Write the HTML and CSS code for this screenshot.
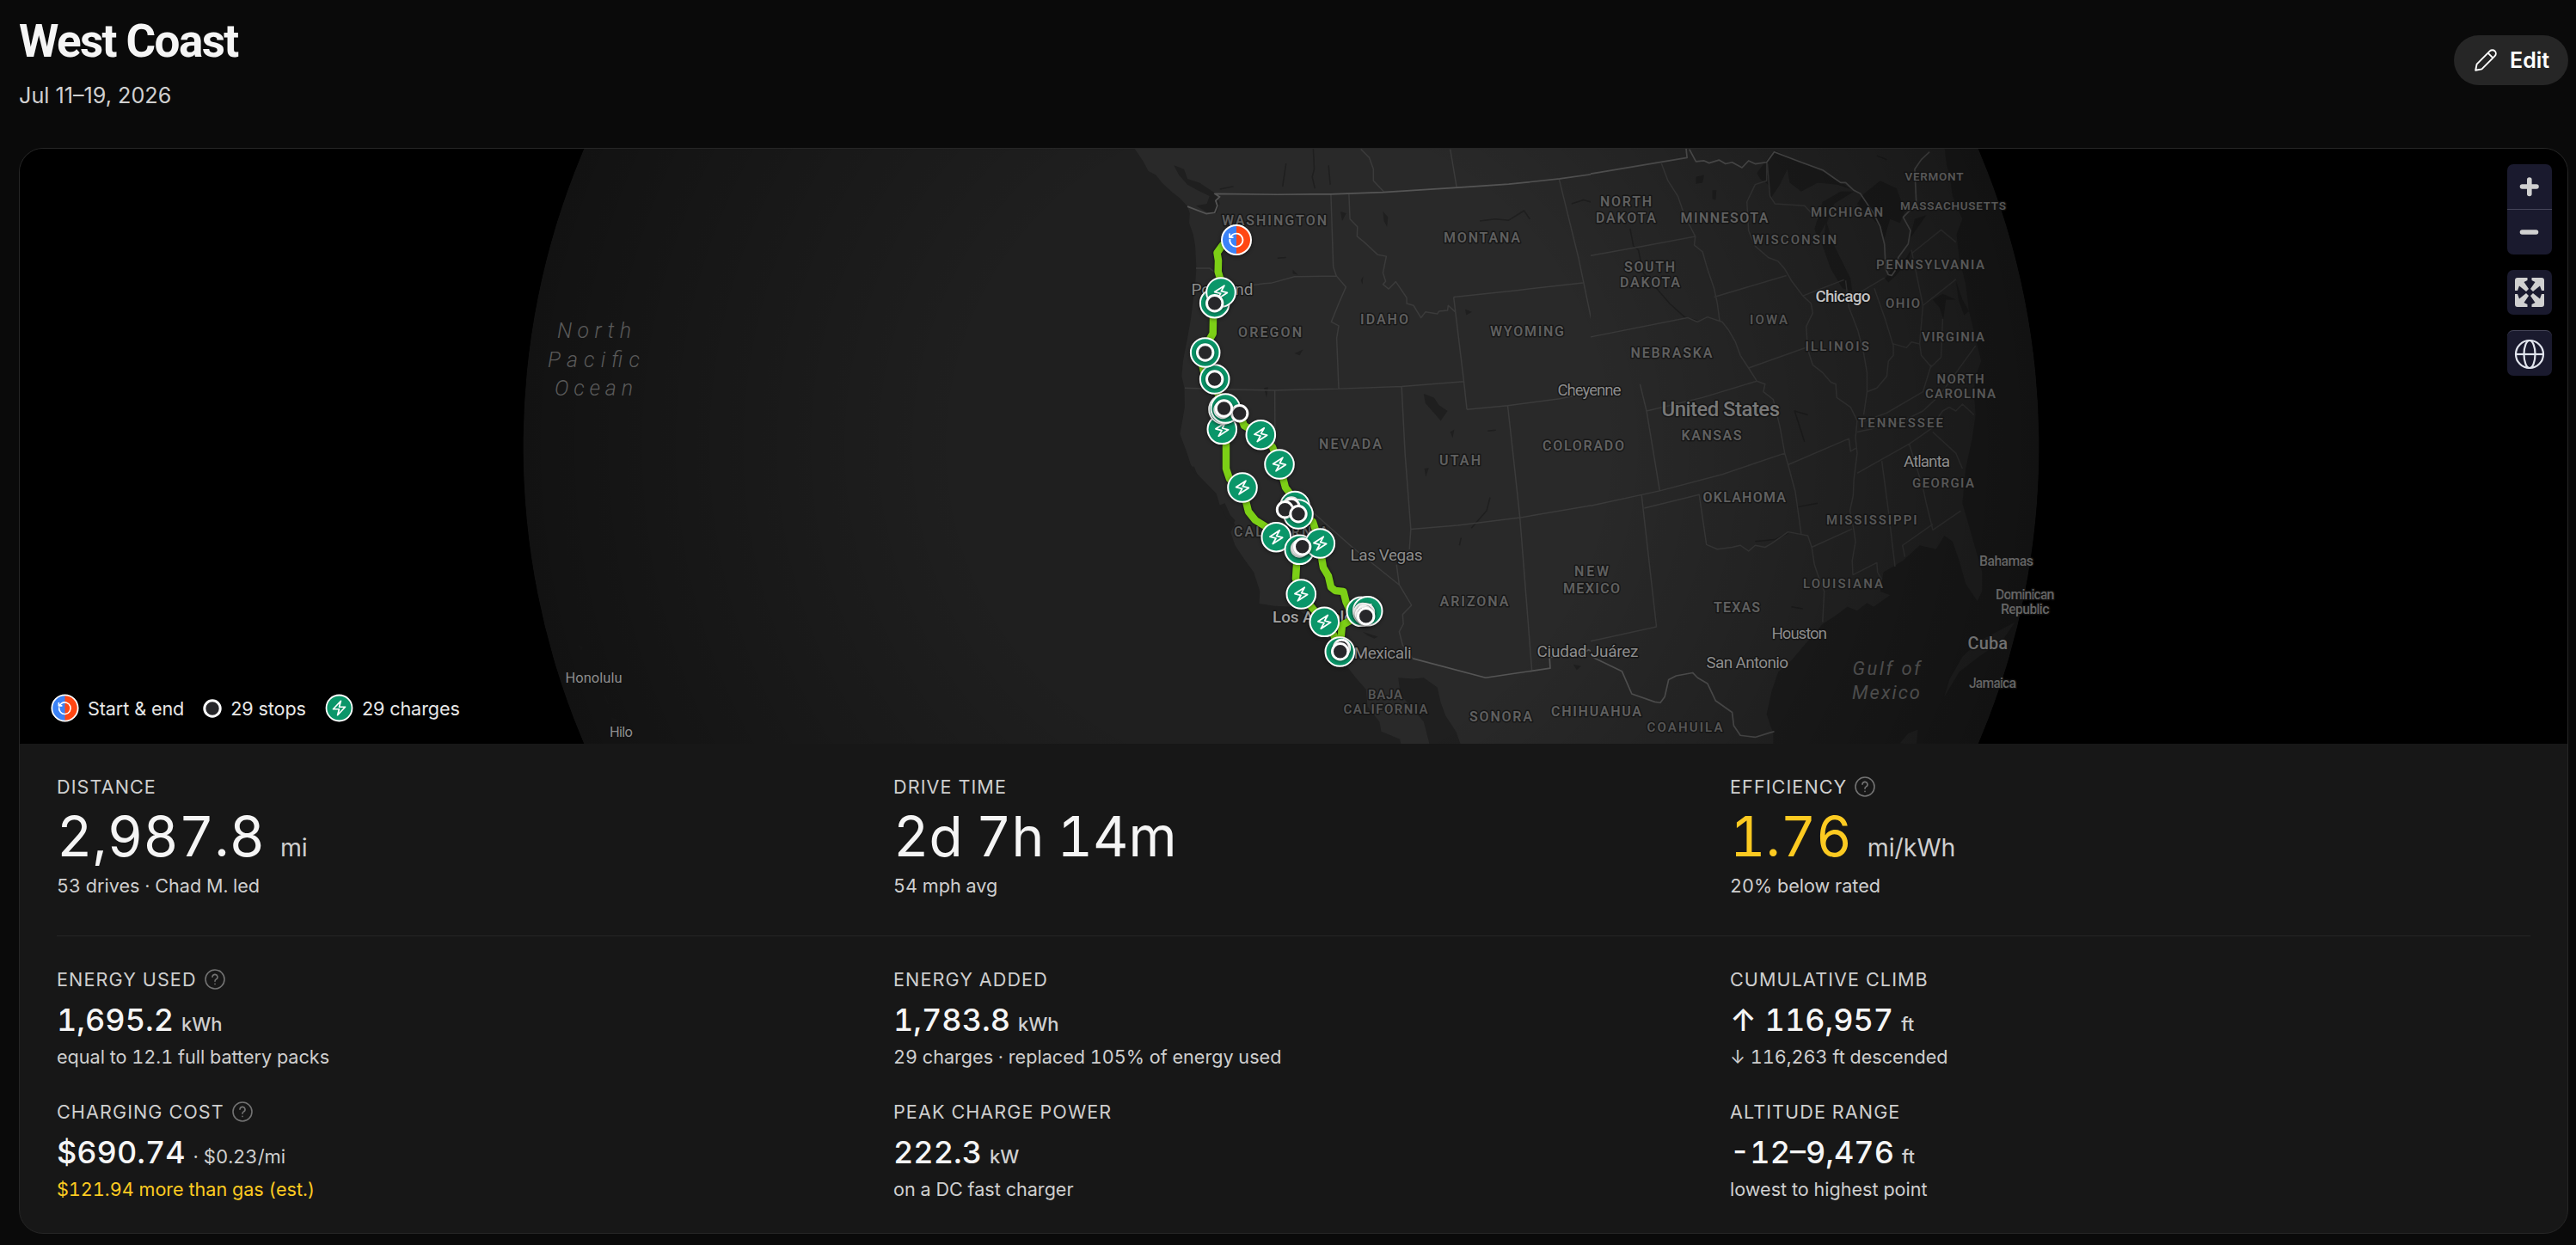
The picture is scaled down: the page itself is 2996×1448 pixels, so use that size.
FILE: index.html
```html
<!DOCTYPE html>
<html lang="en">
<head>
<meta charset="utf-8">
<title>West Coast</title>
<link rel="stylesheet" href="styles.css">
</head>
<body>
<header class="header">
  <div class="heading">
    <h1 class="title">West Coast</h1>
    <p class="dates">Jul 11–19, 2026</p>
  </div>
  <button class="edit" type="button">
    <svg class="edit-icon" viewBox="0 0 26 26"><path d="M1.2 24.8 L2.6 17.6 L17.8 2.4 A4.1 4.1 0 0 1 23.6 8.2 L8.4 23.4 Z M15.6 4.6 L21.4 10.4"/></svg>
    <span>Edit</span>
  </button>
</header>
<main class="card">
  <section class="map">
    <svg class="globe" viewBox="23 173 2963 692">
      <defs>
        <radialGradient id="shade" gradientUnits="userSpaceOnUse" cx="1490" cy="519" r="881.5">
          <stop offset=".42" stop-color="#000" stop-opacity="0"/>
          <stop offset="1" stop-color="#000" stop-opacity=".42"/>
        </radialGradient>
        <clipPath id="disc"><circle cx="1490" cy="519" r="881.5"/></clipPath>
        <g id="bolt"><path class="bolt" d="M14.25 2.25 3.75 13.5H12L9.75 21.75 20.25 10.5H12Z"/></g>
        <g id="charge"><circle class="charge-dot" r="16.8"/><use href="#bolt" transform="rotate(14) scale(.88) translate(-12 -12)"/></g>
        <g id="stop"><circle class="stop-dot" r="9.2"/></g>
        <g id="ends">
          <circle r="17" fill="#3b82f6"/><path d="M0-17A17 17 0 0 1 0 17Z" fill="#ff4713"/>
          <circle class="ring" r="17"/>
          <path class="loop" d="M-7.6 -1.2 A7.6 7.6 0 1 0 -4.6 -5.9 L-7.6 -3 M-8-7.4V-2.9H-3.5"/>
        </g>
      </defs>
      <g clip-path="url(#disc)">
        <circle cx="1490" cy="519" r="881.5" fill="#1f1f1f"/>
        <g transform="translate(1300 170) scale(.3954 .4464)">
          <path class="land" d="M45 0 75 40 90 65 112 75 130 95 160 120 182 135 205 157 212 175 210 200 222 230 228 260 231 318 228 360 222 400 215 450 205 500 192 560 188 600 196 630 197 680 190 715 183 750 200 790 215 830 235 855 262 880 290 905 300 935 325 965 345 985 332 1005 345 1040 375 1080 400 1110 418 1160 416 1192 460 1198 515 1200 560 1225 590 1258 625 1290 640 1320 670 1350 700 1385 730 1415 735 1460 770 1500 775 1525 830 1545 835 1568 920 1568 900 1500 862 1460 832 1430 825 1385 870 1388 900 1385 940 1410 950 1450 965 1485 995 1525 1012 1568H1600V0Z"/>
          <path class="water" d="M165 50 195 60 205 85 240 95 265 110 290 125 300 150 290 175 262 172 230 155 262 150 270 130 235 115 205 100 180 75ZM900 645 930 655 945 675 970 690 950 715 925 690 905 670ZM780 170 795 185 792 210 783 195ZM655 170 672 175 660 195ZM520 540 545 530 535 545ZM978 745 990 738 985 760ZM1022 425 1042 432 1025 440ZM715 350 722 338 720 360ZM902 840 915 838 906 862ZM720 1265 765 1278 755 1283 735 1275ZM1340 1350 1362 1355 1350 1365ZM430 630 442 628 438 655ZM300 935 315 930 330 960 345 975 340 985 320 970ZM210 835 225 835 235 860ZM515 322 530 335 515 332Z"/>
          <path class="river" d="M495 45 490 75 485 105M575 5 578 60 572 80 580 110M620 50 625 100M300 112 340 105M1065 195 1110 190 1150 193 1195 168 1212 190M1095 915 1085 950 1040 995M1010 1020 1005 1040M1088 742 1112 740M1335 150 1370 140 1410 150M470 292 495 290"/>
          <path class="state" d="M627 125 634 315 643 338 671 367 650 410 628 458 650 468 644 500 650 632M230 318 270 318 282 326M400 362 430 358 450 357 520 340 643 338M197 630 330 634 462 636 650 632 835 626 1018 613M462 636 463 860 500 890 575 955 690 1045 828 1143 864 1196 838 1220 840 1245 828 1265 838 1300 868 1335M835 626 845 800 862 998 858 1050M820 1090 828 1143M862 998 1000 988 1183 968 1380 938 1600 898M1147 676 1165 820 1183 968 1218 1365M680 125 683 190 705 210 704 235 725 250 765 283 790 287 780 330 788 352 780 360 797 372 818 353 850 395 850 410 870 415 892 447 905 432 940 437 945 430 970 428 972 415 993 432M988 393 1180 375 1368 356M988 393 1018 613 1027 686M1027 686 1147 676 1300 658 1427 635 1540 620 1570 710M1298 85 1355 290 1403 495 1427 615M715 8 740 30 752 60 752 90 782 118M978 8 997 108M1392 8 1418 68"/>
          <path class="border" d="M205 157 260 176 285 173 293 155 288 142 300 132 285 124 470 126 625 125 780 120 1000 108 1150 99 1300 85 1420 70 1600 44M868 1335 1082 1385 1272 1360 1270 1332 1370 1320 1385 1312 1440 1342 1480 1368 1512 1427 1568 1445"/>
        </g>
        <g transform="translate(1850 170) scale(.38265 .4464)">
          <path class="land" d="M0 0H1075L1082 50 1090 70 1100 130 1130 190 1112 230 1120 290 1140 360 1150 430 1170 500 1187 560 1170 600 1165 640 1170 700 1160 760 1140 840 1130 930 1160 1020 1190 1110 1190 1160 1175 1185 1140 1140 1120 1080 1100 1030 1075 1015 1050 1050 1000 1040 950 1080 890 1110 880 1160 910 1170 860 1200 840 1190 810 1210 780 1200 750 1220 705 1245 660 1290 610 1340 570 1370 550 1420 535 1480 555 1530 555 1568H0ZM1075 1435 1090 1390 1130 1330 1180 1290 1290 1240 1250 1290 1180 1330 1120 1370ZM940 1556 965 1530 995 1520 990 1560Z"/>
          <path class="water" d="M505 70 545 25 560 12 640 42 735 78 790 112 750 100 690 95 640 118 605 95 598 60 575 100 548 135 540 100 515 85ZM690 190 705 145 760 118 800 118 740 150 718 200 735 250 790 345 795 378 765 370 730 320 705 260 715 200 690 240 680 215ZM810 150 830 125 880 90 930 110 955 170 940 200 910 190 893 240 870 200ZM895 345 920 315 955 295 975 270 965 300 930 335 905 355ZM970 240 985 190 1020 180 975 235ZM320 80 345 75 340 95 320 98ZM370 115 382 115 380 140 370 138ZM1040 400 1070 385 1110 400 1080 400 1072 450 1060 420ZM1110 350 1130 400 1150 430 1135 440 1118 400Z"/>
          <path class="river" d="M120 215 130 260 145 270 160 330 215 385 240 410 285 445 325 455M650 770 620 690 660 700M870 25 900 35M500 1030 560 1025 600 1008M610 1200 645 1205M630 940 690 930"/>
          <path class="state" d="M215 45 235 90 265 130 285 180 300 205 318 235 315 258 340 275 355 320 375 370 385 410 392 455M0 285 150 262 318 235M375 393 595 337M535 42 535 90 500 100 475 145 480 220 500 260 540 290 570 300 590 320 610 350 645 390 670 410 675 435 655 470 660 530 675 570 705 590 730 615 745 620 748 655 790 680 810 715 805 760 810 800 800 870 798 910 788 950 800 1000 805 1030 795 1080 797 1117M537 45 545 130 560 150 650 155 672 175 690 188M645 390 770 348M0 497 295 447 325 458 355 445 400 458 420 480 440 510 455 545 480 578 505 612 530 620 525 640 555 660 575 730 590 800 600 830 622 900 640 1010M480 578 660 523M150 620 170 690 210 898M170 690 340 655 505 612M0 937 210 898 400 855 590 800M600 830 785 762 790 795 810 785M155 910 200 1252 0 1290M163 943 330 908 352 1038 385 1050 430 1045 455 1040 480 1055 500 1040 530 1045 550 1035 600 1005 660 1015 672 1045 680 1090 690 1115 710 1160 705 1240M672 1045 795 997M797 1117 870 1085 872 1110 885 1130M775 350 785 420 812 480 830 540 840 590 840 640 830 700M862 370 895 450 920 520M840 640 870 630 900 600 905 560 920 545 920 515 960 525 975 510 1000 515 1010 415 975 270M820 380 893 343M1010 415 1110 347M975 280 1065 218 1110 250M820 720 900 695 1010 640 1035 570M810 745 940 720 1010 690 1060 650 1170 520M810 852 970 775 1045 730M885 820 905 950 925 1095M968 775 1010 890 1020 930 1040 1000 1125 950M955 1070 948 1040 1040 985M1040 745 1110 800 1130 840M1045 720 1070 690 1090 680 1110 690 1130 672 1165 700M1000 515 1005 545 1035 575 1065 550 1070 450"/>
          <path class="border" d="M0 72 28 68 293 30 290 5M300 8 320 40 345 38 360 44 390 36 410 46 430 42 460 56 480 38 500 46 535 42 558 15 640 42 705 62 735 80 760 95 775 95 800 115 820 124 860 175 880 210 893 255 897 320 905 335 915 337 925 325 935 290 965 255 972 220 950 185 990 150 985 60 1005 35 1030 15M0 1328 15 1335 95 1368 125 1427 195 1448 212 1450 225 1435 237 1390 260 1380 310 1372 325 1385 355 1400 380 1445 430 1475 435 1510 455 1535 500 1540 545 1528 558 1525"/>
        </g>
        <path class="land" d="M672 750 678 752 676 757ZM702 805 709 820 706 818ZM711 834 719 838 713 846Z" opacity=".4"/>
        <circle cx="1490" cy="519" r="881.5" fill="url(#shade)"/>
      </g>
      <g class="region">
        <text x="1421" y="262" textLength="122">WASHINGTON</text>
        <text x="1679" y="282" textLength="89">MONTANA</text>
        <text x="1861" y="240" textLength="60">NORTH</text>
        <text x="1856" y="258.500" textLength="70">DAKOTA</text>
        <text x="1889" y="315.500" textLength="59">SOUTH</text>
        <text x="1884" y="334" textLength="70">DAKOTA</text>
        <text x="1440" y="391.500" textLength="74">OREGON</text>
        <text x="1582" y="377" textLength="56">IDAHO</text>
        <text x="1733" y="390.500" textLength="86">WYOMING</text>
        <text x="1534" y="522" textLength="73">NEVADA</text>
        <text x="1674" y="541" textLength="48">UTAH</text>
        <text x="1794" y="524" textLength="95">COLORADO</text>
        <text x="1674.500" y="705" textLength="80">ARIZONA</text>
        <text x="1831" y="670" textLength="40">NEW</text>
        <text x="1818" y="689.500" textLength="66">MEXICO</text>
        <text x="1435" y="623.500" textLength="110">CALIFORNIA</text>
        <text x="1709" y="839" textLength="73">SONORA</text>
        <text x="1804" y="833" textLength="105">CHIHUAHUA</text>
        <text x="1896.500" y="415.500" textLength="95">NEBRASKA</text>
        <text x="1955.500" y="512" textLength="70">KANSAS</text>
        <text x="1980.500" y="584" textLength="96.500">OKLAHOMA</text>
        <text x="1954.500" y="258.500" textLength="102">MINNESOTA</text>
        <text x="1993" y="711.500" textLength="54">TEXAS</text>
      </g>
      <g class="region small">
        <text x="1591" y="813" textLength="40">BAJA</text>
        <text x="1562.500" y="830" textLength="98">CALIFORNIA</text>
        <text x="1915.500" y="851" textLength="88">COAHUILA</text>
        <text x="2106" y="252" textLength="84">MICHIGAN</text>
        <text x="2038" y="284" textLength="98">WISCONSIN</text>
        <text x="2215.500" y="210" textLength="68" class="tiny">VERMONT</text>
        <text x="2210" y="244" textLength="123" class="tiny">MASSACHUSETTS</text>
        <text x="2182" y="312.500" textLength="126">PENNSYLVANIA</text>
        <text x="2193" y="358" textLength="40">OHIO</text>
        <text x="2035" y="377" textLength="44">IOWA</text>
        <text x="2235" y="397" textLength="73">VIRGINIA</text>
        <text x="2099.500" y="407.500" textLength="74.500">ILLINOIS</text>
        <text x="2252.500" y="446" textLength="55">NORTH</text>
        <text x="2239" y="463" textLength="82">CAROLINA</text>
        <text x="2161" y="497" textLength="99">TENNESSEE</text>
        <text x="2224" y="566.500" textLength="72">GEORGIA</text>
        <text x="2124" y="610" textLength="105.500">MISSISSIPPI</text>
        <text x="2097" y="683.500" textLength="93">LOUISIANA</text>
      </g>
      <g class="city">
        <text x="1385.500" y="343" textLength="72">Portland</text>
        <text x="1811.500" y="459.500" textLength="74">Cheyenne</text>
        <text x="1570.500" y="651.500" textLength="84">Las Vegas</text>
        <text x="1480" y="723.500" textLength="103" class="major">Los Angeles</text>
        <text x="1574.500" y="766" textLength="67">Mexicali</text>
        <text x="1787.500" y="764" textLength="118">Ciudad Juárez</text>
        <text x="2111.500" y="351" textLength="64" class="bright">Chicago</text>
        <text x="2214" y="542.500" textLength="54">Atlanta</text>
        <text x="2060.500" y="743" textLength="64.500">Houston</text>
        <text x="1984.500" y="777" textLength="95.500">San Antonio</text>
        <text x="657.500" y="794" textLength="66" class="far">Honolulu</text>
        <text x="709" y="857" textLength="27" class="far">Hilo</text>
      </g>
      <g class="country">
        <text x="1932.500" y="484" textLength="137.500" class="usa">United States</text>
        <text x="2302" y="658" textLength="63">Bahamas</text>
        <text x="2321" y="697" textLength="68.500">Dominican</text>
        <text x="2327" y="714" textLength="56.500">Republic</text>
        <text x="2288.500" y="755" textLength="46.500" class="cuba">Cuba</text>
        <text x="2290" y="799.500" textLength="55">Jamaica</text>
      </g>
      <g class="sea">
        <text x="648" y="393" textLength="86">North</text>
        <text x="637" y="427" textLength="107">Pacific</text>
        <text x="645" y="460" textLength="91">Ocean</text>
        <text x="2154.500" y="784.500" textLength="79" class="gulf">Gulf of</text>
        <text x="2154" y="813" textLength="79" class="gulf">Mexico</text>
      </g>
      <g class="route-lines">
        <path class="route" d="M1438 279 1422 285 1415.500 294 1417 303 1416.700 316 1420 327 1412.700 353 1411 370 1410.700 388 1406 396 1398 423 1400 432 1412 441 1420 470 1426 500 1426 545 1430 557 1445 567 1450 587 1452 595 1460 605 1473 613 1484 625 1510 639 1508 657 1507 673 1513 691 1527 708 1540 723 1551 738 1558.700 758"/>
        <path class="route" d="M1558.700 758 1560 737 1561 727 1570 722 1587 714 1570 710 1565.500 700 1562.500 688 1553 687 1548 683 1545 670 1539 660 1537 648 1535 632 1527 607 1510 597 1505 580 1495 567 1488 540 1480 520 1466 506 1447 495 1441.700 481 1424 475"/>
      </g>
      <g class="markers">
        <use href="#charge" x="1412.700" y="352.700"/>
        <use href="#charge" x="1420" y="340"/>
        <use href="#stop" x="1412.700" y="352.700"/>
        <use href="#charge" x="1412.700" y="441"/>
        <use href="#charge" x="1401.700" y="410"/>
        <use href="#stop" x="1401.700" y="410"/>
        <use href="#stop" x="1412.700" y="441"/>
        <use href="#charge" x="1421.300" y="499.300"/>
        <use href="#charge" x="1423" y="476"/>
        <use href="#charge" x="1425.300" y="475"/>
        <use href="#stop" x="1441.700" y="480.700"/>
        <use href="#stop" x="1422" y="476.500"/>
        <use href="#stop" x="1423.500" y="475"/>
        <use href="#charge" x="1466.300" y="505.700"/>
        <use href="#charge" x="1488" y="540"/>
        <use href="#charge" x="1445" y="567"/>
        <use href="#charge" x="1506" y="588.500"/>
        <use href="#stop" x="1502" y="588"/>
        <use href="#charge" x="1510" y="598"/>
        <use href="#stop" x="1502" y="589.500"/>
        <use href="#stop" x="1494.500" y="592.700"/>
        <use href="#stop" x="1510" y="597.700"/>
        <use href="#charge" x="1484.300" y="624.700"/>
        <use href="#charge" x="1511.300" y="639.300"/>
        <use href="#charge" x="1535.300" y="632"/>
        <use href="#stop" x="1511.500" y="638"/>
        <use href="#stop" x="1513" y="637"/>
        <use href="#stop" x="1514.700" y="635.700"/>
        <use href="#charge" x="1513.300" y="691"/>
        <use href="#charge" x="1540.300" y="723.300"/>
        <use href="#charge" x="1583.300" y="711.300"/>
        <use href="#charge" x="1590.700" y="710.700"/>
        <use href="#stop" x="1585" y="711.500"/>
        <use href="#stop" x="1588.500" y="712"/>
        <use href="#stop" x="1586.500" y="714.500"/>
        <use href="#stop" x="1588.700" y="716.700"/>
        <use href="#charge" x="1558.300" y="758"/>
        <use href="#stop" x="1560.500" y="753.500"/>
        <use href="#stop" x="1558.700" y="757.700"/>
        <use href="#ends" x="1438" y="279"/>
      </g>
    </svg>
    <div class="controls">
      <div class="control-group">
        <button class="control" type="button" aria-label="Zoom in"><svg viewBox="0 0 52 52"><path class="bar" d="M17.500 26H34M25.800 18V34.500"/></svg></button>
        <button class="control" type="button" aria-label="Zoom out"><svg viewBox="0 0 52 52"><path class="bar" d="M17.500 26H33.500"/></svg></button>
      </div>
      <button class="control single" type="button" aria-label="Fullscreen"><svg viewBox="0 0 52 52"><g id="arrow-corner"><path class="arrow" d="M9 24V12Q9 9 12 9H23.500V12L19.500 14 25 22 22 25 14 18.500 12 24Z"/></g><use href="#arrow-corner" transform="matrix(-1 0 0 1 52 0)"/><use href="#arrow-corner" transform="matrix(1 0 0 -1 0 52)"/><use href="#arrow-corner" transform="matrix(-1 0 0 -1 52 52)"/></svg></button>
      <button class="control single" type="button" aria-label="Globe view"><svg viewBox="0 0 52 52"><g class="world"><circle cx="26" cy="27" r="16"/><ellipse cx="26" cy="27" rx="6.500" ry="16"/><path d="M10 27H42"/></g></svg></button>
    </div>
    <div class="legend">
      <span class="legend-item"><svg class="dot" viewBox="-18.500 -18.500 37 37"><use href="#ends"/></svg>Start &amp; end</span>
      <span class="legend-item"><svg class="dot stop-key" viewBox="-11 -11 22 22"><use href="#stop"/></svg>29 stops</span>
      <span class="legend-item"><svg class="dot" viewBox="-18.500 -18.500 37 37"><circle class="charge-dot" r="16.800"/><use href="#bolt" transform="scale(.95) translate(-12 -12)"/></svg>29 charges</span>
    </div>
  </section>
  <section class="stats">
    <div class="grid lead">
      <div class="stat">
        <h2 class="label">Distance</h2>
        <p class="value">2,987.8<span class="unit">mi</span></p>
        <p class="note">53 drives · Chad M. led</p>
      </div>
      <div class="stat">
        <h2 class="label">Drive time</h2>
        <p class="value">2d 7h 14m</p>
        <p class="note">54 mph avg</p>
      </div>
      <div class="stat">
        <h2 class="label">Efficiency<svg class="help" viewBox="0 0 24 24"><path id="help" d="M23 12A11 11 0 1 1 1 12A11 11 0 0 1 23 12ZM9 9.300A3 3 0 1 1 13.200 12.100Q12 12.700 12 14.200M12 17.300V17.600"/></svg></h2>
        <p class="value warn">1.76<span class="unit">mi/kWh</span></p>
        <p class="note">20% below rated</p>
      </div>
    </div>
    <div class="grid detail">
      <div class="stat">
        <h2 class="label">Energy used<svg class="help" viewBox="0 0 24 24"><use href="#help"/></svg></h2>
        <p class="value">1,695.2<span class="unit">kWh</span></p>
        <p class="note">equal to 12.1 full battery packs</p>
      </div>
      <div class="stat">
        <h2 class="label">Energy added</h2>
        <p class="value">1,783.8<span class="unit">kWh</span></p>
        <p class="note">29 charges · replaced 105% of energy used</p>
      </div>
      <div class="stat">
        <h2 class="label">Cumulative climb</h2>
        <p class="value">↑ 116,957<span class="unit">ft</span></p>
        <p class="note">↓ 116,263 ft descended</p>
      </div>
      <div class="stat">
        <h2 class="label">Charging cost<svg class="help" viewBox="0 0 24 24"><use href="#help"/></svg></h2>
        <p class="value">$690.74<span class="unit rate">· $0.23/mi</span></p>
        <p class="note warn">$121.94 more than gas (est.)</p>
      </div>
      <div class="stat">
        <h2 class="label">Peak charge power</h2>
        <p class="value">222.3<span class="unit">kW</span></p>
        <p class="note">on a DC fast charger</p>
      </div>
      <div class="stat">
        <h2 class="label">Altitude range</h2>
        <p class="value">-12–9,476<span class="unit">ft</span></p>
        <p class="note">lowest to highest point</p>
      </div>
    </div>
  </section>
</main>
</body>
</html>
```
FILE: styles.css
```css
* { box-sizing: border-box; }

body {
  margin: 0;
  padding: 0 9px 0 22px;
  height: 1448px;
  overflow: hidden;
  background: #0a0a0a;
  color: #f5f5f5;
  font-family: Inter, "Liberation Sans", sans-serif;
}

h1, h2, p { margin: 0; font-weight: 400; }

button { border: 0; padding: 0; font: inherit; color: inherit; }

.header {
  display: flex;
  justify-content: space-between;
  align-items: flex-start;
  height: 172px;
}

.heading { padding-top: 18px; }

.title {
  font: 700 53px/60px Roboto, sans-serif;
  letter-spacing: -1.6px;
}

.dates {
  margin-top: 15px;
  font-size: 25.200px;
  line-height: 36px;
  color: #d0d0d0;
}

.edit {
  display: flex;
  align-items: center;
  gap: 15px;
  width: 133px;
  height: 58px;
  margin-top: 41px;
  padding-left: 24px;
  border-radius: 29px;
  background: #262626;
  color: #fff;
  font-size: 25px;
  font-weight: 600;
}

.edit-icon {
  width: 26px;
  height: 26px;
  fill: none;
  stroke: #fff;
  stroke-width: 1.9;
  stroke-linejoin: round;
}

.card {
  height: 1263px;
  border: 1px solid #262626;
  border-radius: 28px;
  overflow: hidden;
  background: #171717;
}

/* Map */
.map { position: relative; height: 692px; background: #000; }
.globe { display: block; width: 2963px; height: 692px; }

.land { fill: #292929; }
.water { fill: #1f1f1f; }
.river, .state, .border { fill: none; vector-effect: non-scaling-stroke; stroke-linejoin: round; }
.river { stroke: #1f1f1f; stroke-width: 1.5; }
.state { stroke: #3b3b3b; stroke-width: 1.5; }
.border { stroke: #555; stroke-width: 1.7; }

.globe text {
  font-family: Roboto, sans-serif;
  paint-order: stroke;
  stroke: rgba(18, 18, 18, .75);
  stroke-width: 3px;
  stroke-linejoin: round;
}
.region text { font-size: 16px; font-weight: 600; fill: #606060; }
.small text { font-size: 15px; fill: #575757; }
.region .tiny { font-size: 13.500px; }
.city text { font-size: 19px; fill: #8d8d8d; }
.city .major { fill: #a3a3a3; font-weight: 500; }
.city .bright { fill: #c4c4c4; font-weight: 500; }
.city .far { font-size: 16.500px; }
.country text { font-size: 16px; font-weight: 500; fill: #666; }
.country .usa { font-size: 24px; fill: #787878; }
.country .cuba { font-size: 20px; fill: #707070; }
.sea text { font-size: 25px; font-style: italic; font-weight: 300; fill: #5a5a5a; stroke: none; }
.sea .gulf { font-size: 22px; font-weight: 400; fill: #4c4c4c; }

.route {
  fill: none;
  stroke: #7ccf16;
  stroke-width: 8.500;
  stroke-linejoin: round;
  stroke-linecap: round;
}
.route-lines { filter: drop-shadow(0 0 1.500px rgba(0, 0, 0, .7)); }
.markers use { filter: drop-shadow(0 1px 2px rgba(0, 0, 0, .45)); }
.charge-dot { fill: #0a9669; stroke: #fff; stroke-width: 2; }
.stop-dot { fill: #27272a; stroke: #fff; stroke-width: 3; }
.ring { fill: none; stroke: #fff; stroke-width: 2; }
.bolt { fill: none; stroke: #fff; stroke-width: 2; stroke-linejoin: round; }
.legend .bolt { stroke-width: 1.5; }
.loop { fill: none; stroke: #fff; stroke-width: 1.800; stroke-linejoin: round; }

.controls {
  position: absolute;
  top: 18px;
  right: 18px;
  display: grid;
  gap: 18px;
  width: 52px;
}
.control-group { border-radius: 7px; overflow: hidden; }
.control { display: block; width: 52px; height: 52px; background: #1a1a2e; }
.control + .control { height: 53px; border-top: 1px solid #45455a; }
.single { border-radius: 7px; }
.control svg { display: block; width: 52px; height: 52px; }
.bar { fill: none; stroke: #d0d0d0; stroke-width: 5.600; stroke-linecap: round; }
.arrow { fill: #d0d0d0; }
.world { fill: none; stroke: #e2e5ee; stroke-width: 2.200; }

.legend {
  position: absolute;
  left: 36px;
  bottom: 25px;
  display: flex;
  gap: 22px;
  font-size: 21.600px;
  line-height: 32px;
  color: #e8e8e8;
}
.legend-item { display: flex; align-items: center; gap: 10px; letter-spacing: -.1px; }
.dot { width: 33px; height: 33px; }
.stop-key { width: 22px; height: 22px; }

/* Stats */
.stats { padding: 0 43px; font-variant-numeric: tabular-nums; }
.grid { display: grid; grid-template-columns: repeat(3, 1fr); column-gap: 42px; }
.lead { padding: 35px 0 43px; }
.detail { row-gap: 34px; padding-top: 35px; border-top: 1px solid #262626; }

.label {
  display: flex;
  align-items: center;
  gap: 9px;
  font-size: 21.600px;
  line-height: 30px;
  letter-spacing: 1.080px;
  text-transform: uppercase;
  color: #cfcfcf;
}
.help { width: 24px; height: 24px; fill: none; stroke: #737373; stroke-width: 1.600; stroke-linecap: round; }

.value { white-space: nowrap; }
.lead .value { margin: 11px 0 10px; font-size: 64px; line-height: 64px; word-spacing: -2px; }
.detail .value { margin: 12px 0 8px; font-size: 36px; line-height: 40px; font-weight: 500; }
.value .unit { color: #cfcfcf; line-height: 0; }
.lead .unit { margin-left: 18px; font-size: 28.500px; }
.detail .unit { margin-left: 9px; font-size: 22px; }
.detail .rate { font-weight: 400; }
.note { font-size: 21.600px; line-height: 30px; color: #cfcfcf; white-space: nowrap; }
.warn { color: #fcca21; }
```
